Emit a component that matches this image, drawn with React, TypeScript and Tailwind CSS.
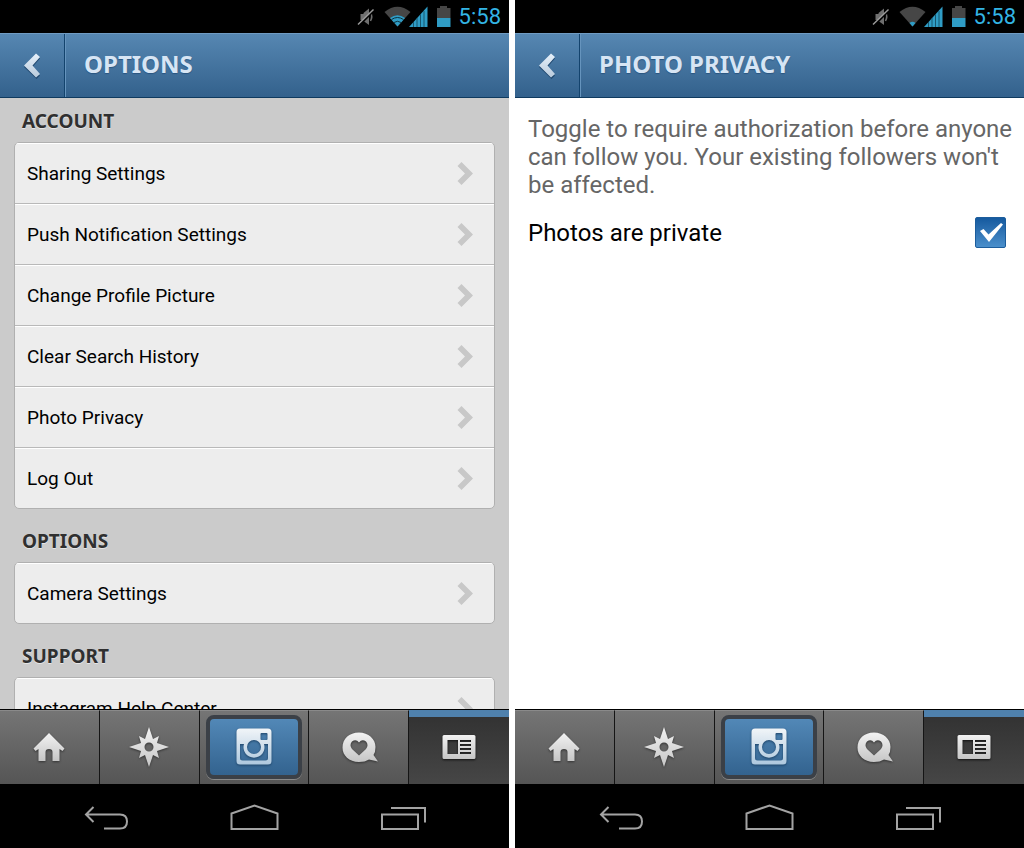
import { useState, type ReactNode } from "react";

const SECTIONS = [
  {
    title: "ACCOUNT",
    items: [
      "Sharing Settings",
      "Push Notification Settings",
      "Change Profile Picture",
      "Clear Search History",
      "Photo Privacy",
      "Log Out",
    ],
  },
  { title: "OPTIONS", items: ["Camera Settings"] },
  { title: "SUPPORT", items: ["Instagram Help Center"] },
];

function StatusBar({ weakWifi }: { weakWifi?: boolean }) {
  return (
    <div className="flex h-[33px] shrink-0 items-center justify-end bg-black pr-2">
      <svg width="104" height="33" viewBox="0 0 104 33" className="mr-0.5">
        {/* muted speaker */}
        <path d="M7.500 14H10.500V20H7.500ZM10.500 13L16 8.500V25L10.500 21Z" fill="#6f6f6f" />
        <path d="M17.500 12Q20 16.500 17.500 21" stroke="#6f6f6f" strokeWidth="1.500" fill="none" />
        <path d="M5.500 26L20.500 11" stroke="#000" strokeWidth="2" />
        <path d="M5 24.500L20.500 9.500" stroke="#9a9a9a" strokeWidth="1.500" />
        {/* wifi */}
        <path d="M31.500 12Q44.500 1.500 57.500 12L44.500 26.500Z" fill="#464646" />
        {weakWifi ? (
          <path d="M41.500 23Q44.500 20.500 47.500 23L44.500 26.500Z" fill="#2f9cc5" />
        ) : (
          <>
            <path d="M37 18Q44.500 12.500 52 18L44.500 26.500Z" fill="#2f9cc5" />
            <path
              d="M38.500 19.500Q44.500 15.500 50.500 19.500M41 22.500Q44.500 20 48 22.500"
              stroke="#0c303c"
              strokeWidth="1"
              fill="none"
            />
          </>
        )}
        {/* signal */}
        <path d="M56 27L74.500 6.500V27Z" fill="#2f9cc5" />
        <path d="M60.500 22V27M64 18V27M67.500 14V27M71 11V27" stroke="#17566e" strokeWidth="1" />
        {/* battery */}
        <path d="M87 6H94V8H97.500V18H84V8H87Z" fill="#464646" />
        <path d="M84 18H97.500V27H84Z" fill="#2f9cc5" />
      </svg>
      <span className="font-['Roboto',sans-serif] text-[22px] leading-8 text-[#33b5e5]">5:58</span>
    </div>
  );
}

function Header({ title }: { title: string }) {
  return (
    <header className="flex h-[65px] shrink-0 border-t border-b border-t-[#6f9bc2] border-b-[#0f3a5f] bg-linear-to-b from-[#5687b2] to-[#33618c]">
      <button
        type="button"
        aria-label="Back"
        className="flex w-[65px] items-center justify-center border-r border-[#13436d]"
      >
        <svg width="20" height="26" viewBox="0 0 20 26">
          <defs>
            <linearGradient id="arrow" x1="0" y1="0" x2="0" y2="1">
              <stop offset="0" stopColor="#e6f0fa" />
              <stop offset="1" stopColor="#b9cbdc" />
            </linearGradient>
          </defs>
          <path d="M14.500 2L18 5.500L10.500 14L18 22.500L14.500 26L2 14Z" fill="#20486f" />
          <path d="M14 0.500L18 4L10.500 12.500L18 21L14 24.500L2 12.500Z" fill="url(#arrow)" />
        </svg>
      </button>
      <h1 className="flex items-center border-l border-[#6694bd] pb-1 pl-[18px] font-['Noto_Sans',sans-serif] text-2xl leading-8 font-bold text-[#d7e5f4] [text-shadow:0_1px_1px_#2a5580]">
        {title}
      </h1>
    </header>
  );
}

function SettingsSection({ title, items }: { title: string; items: string[] }) {
  return (
    <section>
      <h2 className="mb-[9px] pl-2 font-['Noto_Sans',sans-serif] text-[19px] leading-6 font-bold text-[#303030] [text-shadow:0_1px_0_#e6e6e6]">
        {title}
      </h2>
      <ul className="overflow-hidden rounded-[5px] border border-[#b0b0b0] bg-[#ededed]">
        {items.map((item) => (
          <li key={item} className="border-t border-[#b9b9b9] first:border-t-0">
            <button
              type="button"
              className="flex h-[60px] w-full items-center justify-between border-t border-white pr-5 pl-3 text-left text-[19px] leading-6 text-black"
            >
              {item}
              <svg width="18" height="26" viewBox="0 0 18 26">
                <path d="M5.500 1L17 12.500L5.500 24L1.500 20L9 12.500L1.500 5Z" fill="#c8c8c8" />
              </svg>
            </button>
          </li>
        ))}
      </ul>
    </section>
  );
}

function Tab({ label, active, children }: { label: string; active?: boolean; children: ReactNode }) {
  return (
    <button
      type="button"
      aria-label={label}
      className={
        active
          ? "flex items-center justify-center border-t-[7px] border-[#4f81ad] bg-linear-to-b from-[#333] to-[#464646] pb-2"
          : "flex items-center justify-center border-t border-r border-t-[#8a8a8a] border-r-[#151515] bg-linear-to-b from-[#757575] to-[#555] pb-0.5"
      }
    >
      {children}
    </button>
  );
}

function TabBar() {
  return (
    <nav className="grid h-[76px] shrink-0 grid-cols-[10fr_10fr_11fr_10fr_10fr] border-t border-b border-black bg-black">
      <Tab label="Home">
        <svg width="40" height="40" viewBox="0 0 40 40" className="drop-shadow-[0_1px_1px_#333]">
          <defs>
            <linearGradient id="metal" x1="0" y1="0" x2="0" y2="1">
              <stop offset="0" stopColor="#f2f2f2" />
              <stop offset="1" stopColor="#c6c6c6" />
            </linearGradient>
          </defs>
          <path
            d="M20 6L35.500 21.500L33.500 24L30.500 22V34H23.500V25Q23.500 22 20 22Q16.500 22 16.500 25V34H9.500V22L6.500 24L4.500 21.500Z"
            fill="url(#metal)"
          />
        </svg>
      </Tab>
      <Tab label="Explore">
        <svg width="40" height="40" viewBox="0 0 40 40" className="drop-shadow-[0_1px_1px_#333]">
          <path
            fillRule="evenodd"
            d="M20 0L24 12L30 9L28 16L40 20L28 24L30 31L24 28L20 40L16 28L10 31L12 24L0 20L12 16L10 9L16 12ZM20 15.500A4.500 4.500 0 1 0 20 24.500A4.500 4.500 0 1 0 20 15.500Z"
            fill="url(#metal)"
          />
        </svg>
      </Tab>
      <Tab label="Camera">
        <span className="flex h-16 w-24 items-center justify-center rounded-lg border-4 border-[#3b4047] bg-linear-to-b from-[#5288b7] to-[#33638f] shadow-[0_1px_0_#8a8a8a]">
          <svg width="36" height="37" viewBox="0 0 36 37" className="drop-shadow-[0_1px_1px_#1d4468]">
            <defs>
              <linearGradient id="lens" x1="0" y1="0" x2="0" y2="1">
                <stop offset="0" stopColor="#f1f5f8" />
                <stop offset="1" stopColor="#aec8de" />
              </linearGradient>
            </defs>
            <path
              fillRule="evenodd"
              d="M4 0.500H32Q35.500 0.500 35.500 4V33Q35.500 36.500 32 36.500H4Q0.500 36.500 0.500 33V4Q0.500 0.500 4 0.500ZM25.500 5Q24.500 5 24.500 6V11Q24.500 12 25.500 12H30.500Q31.500 12 31.500 11V6Q31.500 5 30.500 5ZM4 16V30Q4 32.500 6.500 32.500H29.500Q32 32.500 32 30V16H28A10.500 10.500 0 1 1 8 16ZM18 12A7 7 0 1 0 18 26A7 7 0 1 0 18 12Z"
              fill="url(#lens)"
            />
          </svg>
        </span>
      </Tab>
      <Tab label="News">
        <svg width="40" height="40" viewBox="0 0 40 40" className="drop-shadow-[0_1px_1px_#333]">
          <path
            fillRule="evenodd"
            d="M20 5.500C29.500 5.500 36.500 12 36.500 20Q36.500 25 34.500 28L39 34.500L30 32.500Q26 35 20 35C10 35 3.500 28.500 3.500 20.500C3.500 12 10 5.500 20 5.500ZM20 28.500L27 22Q30 18 27 14.500Q23 11.500 20 15.500Q17 11.500 13 14.500Q10 18 13 22Z"
            fill="url(#metal)"
          />
        </svg>
      </Tab>
      <Tab label="Profile" active>
        <svg width="34" height="26" viewBox="0 0 34 26" className="drop-shadow-[0_1px_1px_#111]">
          <path
            fillRule="evenodd"
            d="M2 1H32Q33.500 1 33.500 2.500V23.500Q33.500 25 32 25H2Q0.500 25 0.500 23.500V2.500Q0.500 1 2 1ZM5.500 6V20H16V6ZM18 6V8H29V6ZM18 10V12H29V10ZM18 14V16H29V14ZM18 18V20H29V18Z"
            fill="url(#metal)"
          />
        </svg>
      </Tab>
    </nav>
  );
}

function SystemNav() {
  return (
    <div className="flex h-[63px] shrink-0 items-center justify-center gap-[102px] bg-black pt-0.5">
      <button type="button" aria-label="System back">
        <svg width="44" height="28" viewBox="0 0 44 28" fill="none" stroke="#a3a3a3" strokeWidth="2">
          <path d="M9.500 3L2 10.500L9.500 18M2 10.500H36Q43 10.500 43 17.500Q43 24.500 36 24.500H20" />
        </svg>
      </button>
      <button type="button" aria-label="System home">
        <svg width="49" height="28" viewBox="0 0 49 28" fill="none" stroke="#a3a3a3" strokeWidth="2">
          <path d="M1.500 25V9.500L24.500 1.500L47.500 9.500V25Z" />
        </svg>
      </button>
      <button type="button" aria-label="Recent apps">
        <svg width="45" height="28" viewBox="0 0 45 28" fill="none" stroke="#a3a3a3" strokeWidth="2">
          <path d="M1 10.500H37V25H1ZM10 4H44V18.500" />
        </svg>
      </button>
    </div>
  );
}

function Screen({ title, weakWifi, children }: { title: string; weakWifi?: boolean; children: ReactNode }) {
  return (
    <div className="flex min-h-0 min-w-0 flex-col">
      <StatusBar weakWifi={weakWifi} />
      <Header title={title} />
      {children}
      <TabBar />
      <SystemNav />
    </div>
  );
}

export default function App() {
  const [isPrivate, setIsPrivate] = useState(true);

  return (
    <div className="grid h-screen grid-cols-2 gap-1.5 overflow-hidden bg-white font-['Roboto',sans-serif]">
      <Screen title="OPTIONS">
        <main className="min-h-0 flex-1 space-y-5 overflow-hidden bg-[#cbcbcb] px-3.5 pt-[11px]">
          {SECTIONS.map((section) => (
            <SettingsSection key={section.title} title={section.title} items={section.items} />
          ))}
        </main>
      </Screen>
      <Screen title="PHOTO PRIVACY" weakWifi>
        <main className="min-h-0 flex-1 pt-[17px] pr-1.5 pl-[13px] text-2xl leading-7">
          <p className="text-[#666]">
            Toggle to require authorization before anyone can follow you. Your existing followers won't be affected.
          </p>
          <label className="mt-[18px] flex items-center justify-between pr-3 text-black">
            Photos are private
            <span className="relative flex">
              <input
                type="checkbox"
                checked={isPrivate}
                onChange={(e) => setIsPrivate(e.target.checked)}
                className="peer h-[31px] w-[31px] appearance-none rounded-xs border border-[#1c5d9c] bg-linear-to-b from-[#155a9f] to-[#4a8fcb]"
              />
              <svg
                viewBox="0 0 31 31"
                className="pointer-events-none absolute inset-0 hidden peer-checked:block"
              >
                <path d="M5 14L8.500 12L13.500 17.500L26 6L28 7.500L14 25Z" fill="#fff" />
              </svg>
            </span>
          </label>
        </main>
      </Screen>
    </div>
  );
}
